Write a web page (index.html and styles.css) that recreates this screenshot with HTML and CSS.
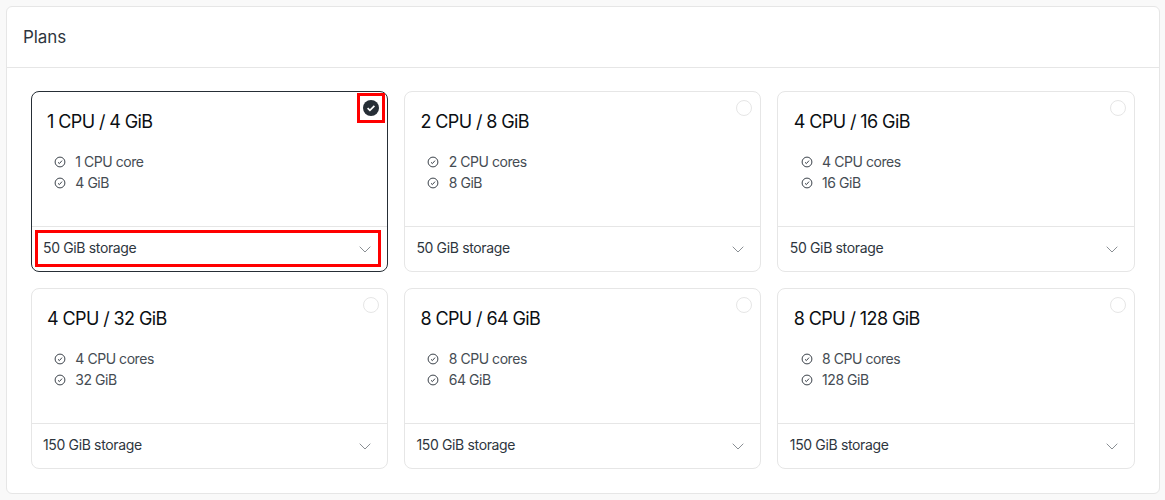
FILE: index.html
```html
<!DOCTYPE html>
<html lang="en">
<head>
<meta charset="utf-8">
<title>Plans</title>
<link rel="stylesheet" href="styles.css">
</head>
<body>
<svg class="defs" width="0" height="0" aria-hidden="true">
  <symbol id="tick" viewBox="0 0 12 12"><circle cx="6" cy="6" r="4.9" fill="none" stroke="currentColor" stroke-width="1"/><path d="M4 6.3l1.4 1.3L8 4.6" fill="none" stroke="currentColor" stroke-width="1"/></symbol>
  <symbol id="chev" viewBox="0 0 12 7"><path d="M.7.7L6 6l5.3-5.3" fill="none" stroke="currentColor" stroke-width="1"/></symbol>
</svg>
<section class="panel">
  <h2 class="panel-title">Plans</h2>
  <div class="grid">
    <article class="plan selected">
      <span class="radio-mark hl"><svg class="radio-on" viewBox="0 0 16 16"><circle cx="8" cy="8" r="8" fill="#262e36"/><path d="M4.6 8.2l2.3 2.2 4.5-4.6" fill="none" stroke="#fff" stroke-width="1.7"/></svg></span>
      <h3 class="plan-title">1 CPU / 4 GiB</h3>
      <ul class="specs">
        <li><svg class="tick"><use href="#tick"/></svg>1 CPU core</li>
        <li><svg class="tick"><use href="#tick"/></svg>4 GiB</li>
      </ul>
      <div class="foot"><div class="select hl"><span>50 GiB storage</span><svg class="chev"><use href="#chev"/></svg></div></div>
    </article>
    <article class="plan">
      <span class="radio-mark"><span class="radio-off"></span></span>
      <h3 class="plan-title">2 CPU / 8 GiB</h3>
      <ul class="specs">
        <li><svg class="tick"><use href="#tick"/></svg>2 CPU cores</li>
        <li><svg class="tick"><use href="#tick"/></svg>8 GiB</li>
      </ul>
      <div class="foot"><div class="select"><span>50 GiB storage</span><svg class="chev"><use href="#chev"/></svg></div></div>
    </article>
    <article class="plan">
      <span class="radio-mark"><span class="radio-off"></span></span>
      <h3 class="plan-title">4 CPU / 16 GiB</h3>
      <ul class="specs">
        <li><svg class="tick"><use href="#tick"/></svg>4 CPU cores</li>
        <li><svg class="tick"><use href="#tick"/></svg>16 GiB</li>
      </ul>
      <div class="foot"><div class="select"><span>50 GiB storage</span><svg class="chev"><use href="#chev"/></svg></div></div>
    </article>
    <article class="plan">
      <span class="radio-mark"><span class="radio-off"></span></span>
      <h3 class="plan-title">4 CPU / 32 GiB</h3>
      <ul class="specs">
        <li><svg class="tick"><use href="#tick"/></svg>4 CPU cores</li>
        <li><svg class="tick"><use href="#tick"/></svg>32 GiB</li>
      </ul>
      <div class="foot"><div class="select"><span>150 GiB storage</span><svg class="chev"><use href="#chev"/></svg></div></div>
    </article>
    <article class="plan">
      <span class="radio-mark"><span class="radio-off"></span></span>
      <h3 class="plan-title">8 CPU / 64 GiB</h3>
      <ul class="specs">
        <li><svg class="tick"><use href="#tick"/></svg>8 CPU cores</li>
        <li><svg class="tick"><use href="#tick"/></svg>64 GiB</li>
      </ul>
      <div class="foot"><div class="select"><span>150 GiB storage</span><svg class="chev"><use href="#chev"/></svg></div></div>
    </article>
    <article class="plan">
      <span class="radio-mark"><span class="radio-off"></span></span>
      <h3 class="plan-title">8 CPU / 128 GiB</h3>
      <ul class="specs">
        <li><svg class="tick"><use href="#tick"/></svg>8 CPU cores</li>
        <li><svg class="tick"><use href="#tick"/></svg>128 GiB</li>
      </ul>
      <div class="foot"><div class="select"><span>150 GiB storage</span><svg class="chev"><use href="#chev"/></svg></div></div>
    </article>
  </div>
</section>
</body>
</html>
```
FILE: styles.css
```css
* { box-sizing: border-box; }
html, body { height: 100%; }
body {
  margin: 0;
  padding: 6px 5px 0 6px;
  background: #f9f9f9;
  font-family: Inter, "Liberation Sans", sans-serif;
  color: #2e363e;
  overflow: hidden;
}
.defs { position: absolute; }
.panel {
  height: 488px;
  background: #fff;
  border: 1px solid #e6e6e6;
  border-radius: 6px;
}
.panel-title {
  margin: 0;
  height: 61px;
  padding: 0 16px 1px;
  display: flex;
  align-items: center;
  font-size: 17px;
  letter-spacing: -0.1px;
  font-weight: 400;
  border-bottom: 1px solid #e6e6e6;
}
.grid {
  display: grid;
  grid-template-columns: repeat(3, 1fr);
  grid-auto-rows: 180.5px;
  gap: 16.5px 16px;
  padding: 23px 24.3px 0 23.5px;
}
.plan {
  position: relative;
  display: flex;
  flex-direction: column;
  border: 1px solid #e6e6e6;
  border-radius: 8px;
  background: #fff;
}
.plan.selected { border-color: #262e36; }
.plan-title {
  margin: 0;
  padding: 19px 16px 0 15.5px;
  font-size: 18px;
  line-height: 22px;
  font-weight: 400;
  letter-spacing: -0.6px;
  color: #0b0f13;
}
.specs {
  list-style: none;
  margin: 18px 0 0;
  padding: 0 0 0 22.3px;
  font-size: 14px;
  line-height: 21px;
  letter-spacing: -0.45px;
  color: #454c53;
}
.specs li { display: flex; align-items: center; gap: 9.5px; }
.tick { width: 12px; height: 12px; color: #3b424a; flex: none; }
.foot {
  margin-top: auto;
  height: 45px;
  border-top: 1px solid #e6e6e6;
  padding: 6px 9px 7px 6.5px;
  display: flex;
}
.select {
  flex: 1;
  display: flex;
  align-items: center;
  justify-content: space-between;
  padding: 0 7px 2px 5px;
  font-size: 14px;
  letter-spacing: -0.35px;
  color: #2e363e;
}
.chev { width: 12px; height: 7px; color: #8a8f94; margin-top: 4px; }
.radio-mark {
  position: absolute;
  top: 4px;
  right: 5px;
  width: 22px;
  height: 24px;
  display: flex;
  align-items: center;
  justify-content: center;
}
.radio-on { width: 16px; height: 16px; display: block; }
.radio-off {
  width: 16px;
  height: 16px;
  border: 1px solid #e6e6e6;
  border-radius: 50%;
  background: #fff;
}
.hl { outline: 3px solid #f00; }
```
